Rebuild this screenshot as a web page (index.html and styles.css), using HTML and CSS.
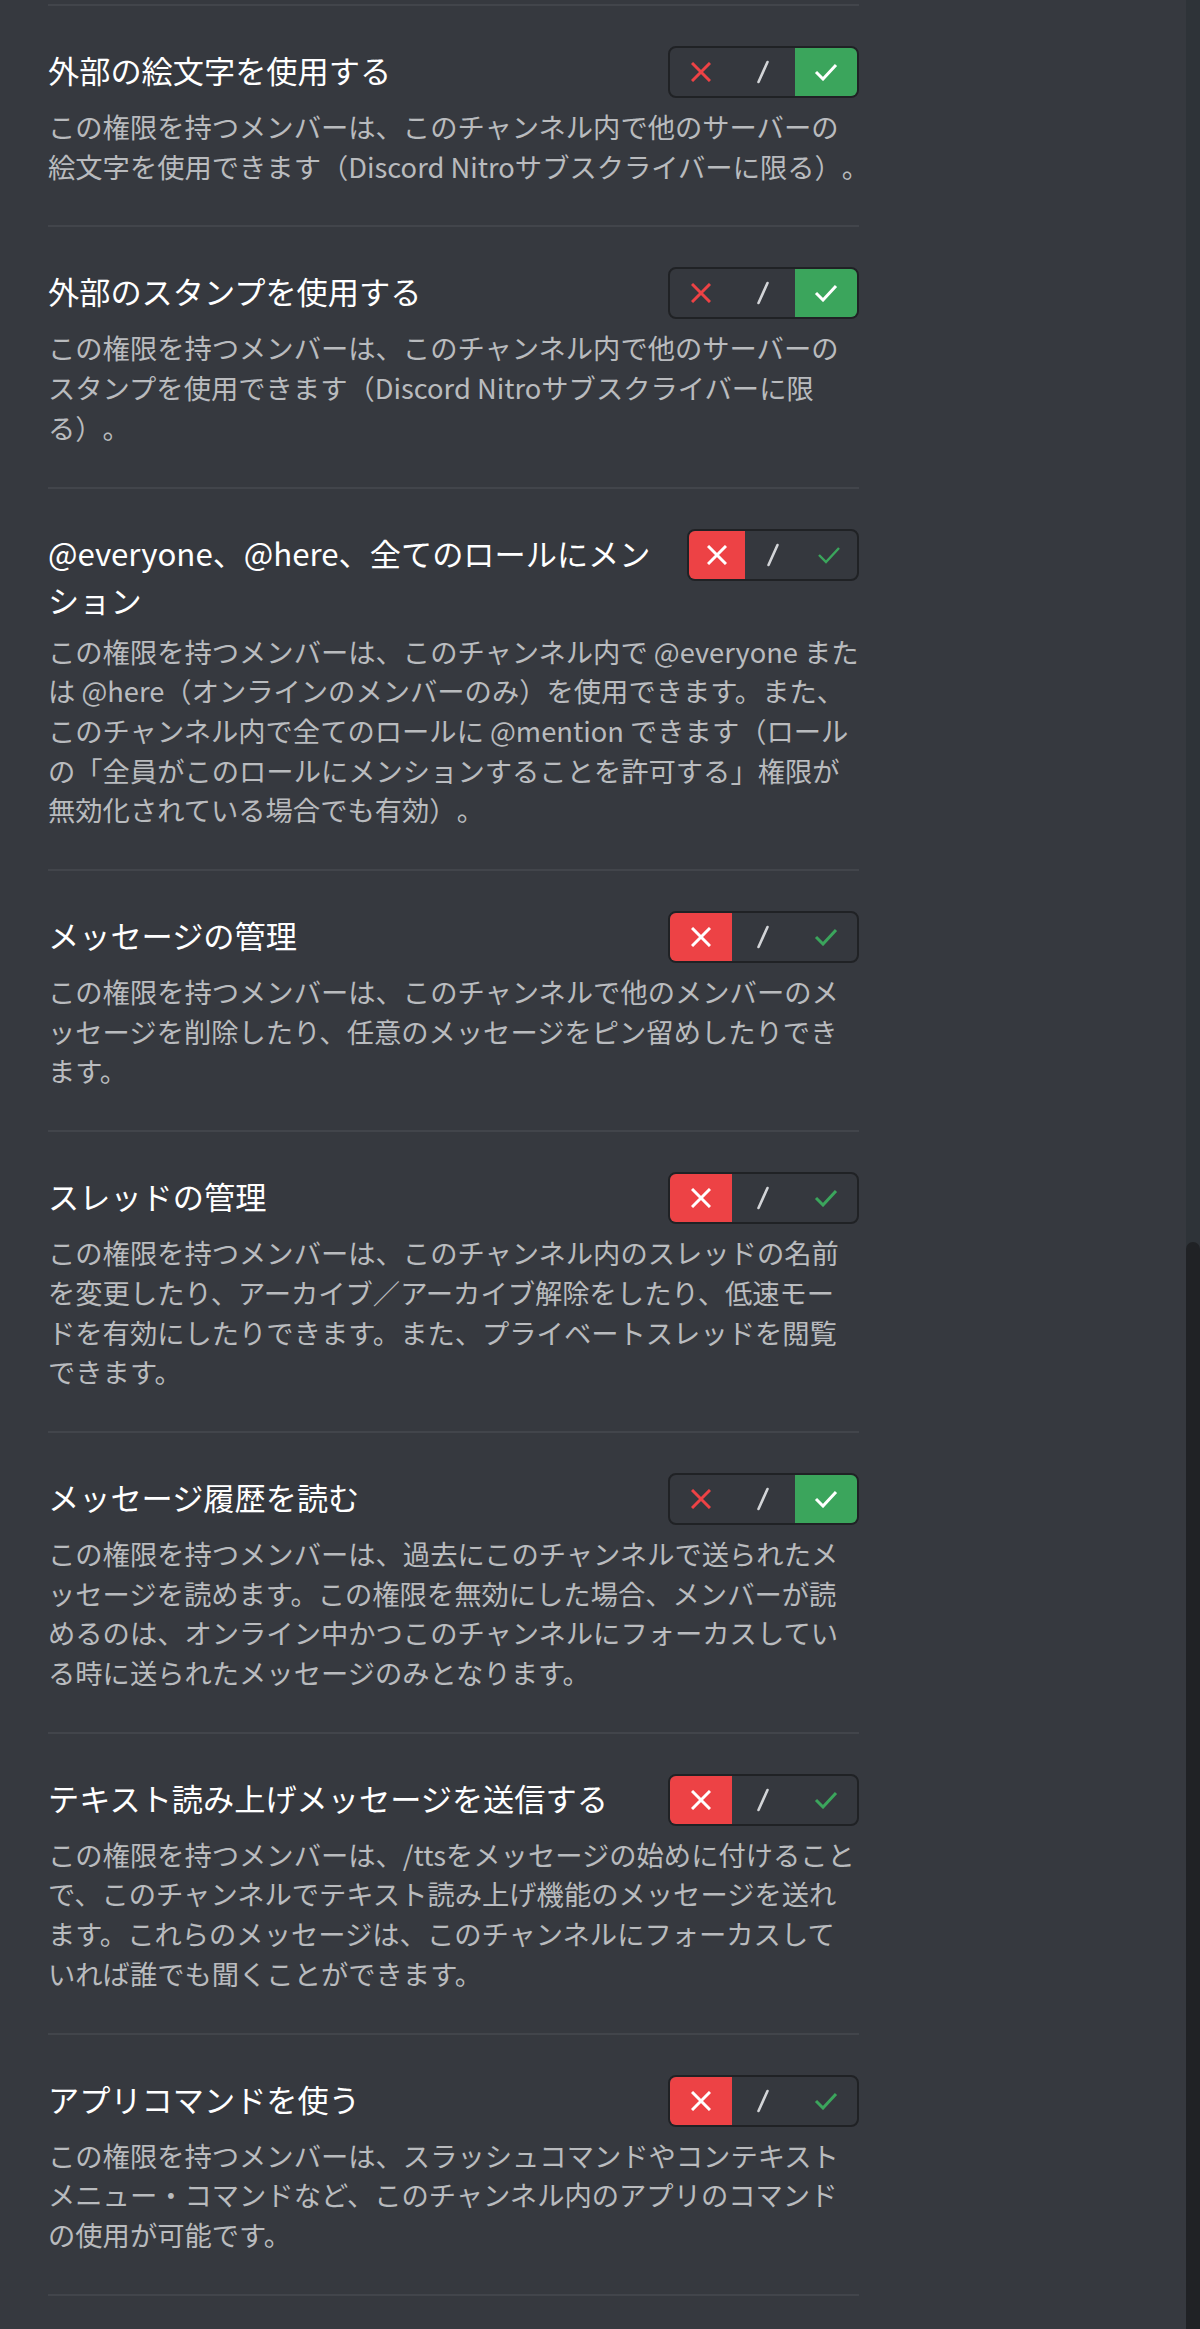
FILE: index.html
```html
<!DOCTYPE html>
<html lang="ja">
<head>
<meta charset="utf-8">
<title>チャンネル権限</title>
<link rel="stylesheet" href="styles.css">
</head>
<body>
<main class="page">
  <div class="list">

    <section class="perm">
      <div class="perm-head">
        <h3 class="perm-title">外部の絵文字を使用する</h3>
        <div class="toggle">
          <span class="seg seg-deny"><svg class="ico-x" viewBox="0 0 20 20"><path d="M1 1L19 19M19 1L1 19"/></svg></span>
          <span class="seg seg-pass"><svg class="ico-slash" viewBox="0 0 14 24"><path d="M11.5 2L2.5 22"/></svg></span>
          <span class="seg seg-allow is-on"><svg class="ico-check" viewBox="0 0 24 18"><path d="M2 9L9 16L22 2"/></svg></span>
        </div>
      </div>
      <p class="perm-desc">この権限を持つメンバーは、このチャンネル内で他のサーバーの<br>絵文字を使用できます（Discord Nitroサブスクライバーに限る）。</p>
    </section>

    <section class="perm">
      <div class="perm-head">
        <h3 class="perm-title">外部のスタンプを使用する</h3>
        <div class="toggle">
          <span class="seg seg-deny"><svg class="ico-x" viewBox="0 0 20 20"><path d="M1 1L19 19M19 1L1 19"/></svg></span>
          <span class="seg seg-pass"><svg class="ico-slash" viewBox="0 0 14 24"><path d="M11.5 2L2.5 22"/></svg></span>
          <span class="seg seg-allow is-on"><svg class="ico-check" viewBox="0 0 24 18"><path d="M2 9L9 16L22 2"/></svg></span>
        </div>
      </div>
      <p class="perm-desc">この権限を持つメンバーは、このチャンネル内で他のサーバーの<br>スタンプを使用できます（Discord Nitroサブスクライバーに限<br>る）。</p>
    </section>

    <section class="perm">
      <div class="perm-head">
        <h3 class="perm-title">@everyone、@here、全てのロールにメン<br>ション</h3>
        <div class="toggle toggle--compact">
          <span class="seg seg-deny is-on"><svg class="ico-x" viewBox="0 0 20 20"><path d="M1 1L19 19M19 1L1 19"/></svg></span>
          <span class="seg seg-pass"><svg class="ico-slash" viewBox="0 0 14 24"><path d="M11.5 2L2.5 22"/></svg></span>
          <span class="seg seg-allow"><svg class="ico-check ico-check--thin" viewBox="0 0 24 18"><path d="M2 9L9 16L22 2"/></svg></span>
        </div>
      </div>
      <p class="perm-desc">この権限を持つメンバーは、このチャンネル内で @everyone また<br>は @here（オンラインのメンバーのみ）を使用できます。また、<br>このチャンネル内で全てのロールに @mention できます（ロール<br>の「全員がこのロールにメンションすることを許可する」権限が<br>無効化されている場合でも有効）。</p>
    </section>

    <section class="perm">
      <div class="perm-head">
        <h3 class="perm-title">メッセージの管理</h3>
        <div class="toggle">
          <span class="seg seg-deny is-on"><svg class="ico-x" viewBox="0 0 20 20"><path d="M1 1L19 19M19 1L1 19"/></svg></span>
          <span class="seg seg-pass"><svg class="ico-slash" viewBox="0 0 14 24"><path d="M11.5 2L2.5 22"/></svg></span>
          <span class="seg seg-allow"><svg class="ico-check" viewBox="0 0 24 18"><path d="M2 9L9 16L22 2"/></svg></span>
        </div>
      </div>
      <p class="perm-desc">この権限を持つメンバーは、このチャンネルで他のメンバーのメ<br>ッセージを削除したり、任意のメッセージをピン留めしたりでき<br>ます。</p>
    </section>

    <section class="perm">
      <div class="perm-head">
        <h3 class="perm-title">スレッドの管理</h3>
        <div class="toggle">
          <span class="seg seg-deny is-on"><svg class="ico-x" viewBox="0 0 20 20"><path d="M1 1L19 19M19 1L1 19"/></svg></span>
          <span class="seg seg-pass"><svg class="ico-slash" viewBox="0 0 14 24"><path d="M11.5 2L2.5 22"/></svg></span>
          <span class="seg seg-allow"><svg class="ico-check" viewBox="0 0 24 18"><path d="M2 9L9 16L22 2"/></svg></span>
        </div>
      </div>
      <p class="perm-desc">この権限を持つメンバーは、このチャンネル内のスレッドの名前<br>を変更したり、アーカイブ／アーカイブ解除をしたり、低速モー<br>ドを有効にしたりできます。また、プライベートスレッドを閲覧<br>できます。</p>
    </section>

    <section class="perm">
      <div class="perm-head">
        <h3 class="perm-title">メッセージ履歴を読む</h3>
        <div class="toggle">
          <span class="seg seg-deny"><svg class="ico-x" viewBox="0 0 20 20"><path d="M1 1L19 19M19 1L1 19"/></svg></span>
          <span class="seg seg-pass"><svg class="ico-slash" viewBox="0 0 14 24"><path d="M11.5 2L2.5 22"/></svg></span>
          <span class="seg seg-allow is-on"><svg class="ico-check" viewBox="0 0 24 18"><path d="M2 9L9 16L22 2"/></svg></span>
        </div>
      </div>
      <p class="perm-desc">この権限を持つメンバーは、過去にこのチャンネルで送られたメ<br>ッセージを読めます。この権限を無効にした場合、メンバーが読<br>めるのは、オンライン中かつこのチャンネルにフォーカスしてい<br>る時に送られたメッセージのみとなります。</p>
    </section>

    <section class="perm">
      <div class="perm-head">
        <h3 class="perm-title">テキスト読み上げメッセージを送信する</h3>
        <div class="toggle">
          <span class="seg seg-deny is-on"><svg class="ico-x" viewBox="0 0 20 20"><path d="M1 1L19 19M19 1L1 19"/></svg></span>
          <span class="seg seg-pass"><svg class="ico-slash" viewBox="0 0 14 24"><path d="M11.5 2L2.5 22"/></svg></span>
          <span class="seg seg-allow"><svg class="ico-check" viewBox="0 0 24 18"><path d="M2 9L9 16L22 2"/></svg></span>
        </div>
      </div>
      <p class="perm-desc">この権限を持つメンバーは、/ttsをメッセージの始めに付けること<br>で、このチャンネルでテキスト読み上げ機能のメッセージを送れ<br>ます。これらのメッセージは、このチャンネルにフォーカスして<br>いれば誰でも聞くことができます。</p>
    </section>

    <section class="perm">
      <div class="perm-head">
        <h3 class="perm-title">アプリコマンドを使う</h3>
        <div class="toggle">
          <span class="seg seg-deny is-on"><svg class="ico-x" viewBox="0 0 20 20"><path d="M1 1L19 19M19 1L1 19"/></svg></span>
          <span class="seg seg-pass"><svg class="ico-slash" viewBox="0 0 14 24"><path d="M11.5 2L2.5 22"/></svg></span>
          <span class="seg seg-allow"><svg class="ico-check" viewBox="0 0 24 18"><path d="M2 9L9 16L22 2"/></svg></span>
        </div>
      </div>
      <p class="perm-desc">この権限を持つメンバーは、スラッシュコマンドやコンテキスト<br>メニュー・コマンドなど、このチャンネル内のアプリのコマンド<br>の使用が可能です。</p>
    </section>

  </div>
</main>
<div class="scrollbar"><div class="scrollbar-thumb"></div></div>
</body>
</html>
```
FILE: styles.css
```css
html, body {
  margin: 0;
  padding: 0;
}
body {
  background: #36393f;
  font-family: "Noto Sans CJK JP", "Noto Sans", "Liberation Sans", sans-serif;
  height: 2329px;
  overflow: hidden;
  text-spacing-trim: space-all;
}
.page {
  padding: 4px 0 0 48px;
}
.list {
  width: 811px;
  border-top: 2px solid #42454b;
}
.perm {
  padding: 40px 0 39px;
  border-bottom: 2px solid #42454b;
}
.perm-head {
  display: flex;
  align-items: flex-start;
  gap: 20px;
}
.perm-title {
  flex: 1;
  min-width: 0;
  margin: 0;
  font-size: 31.2px;
  line-height: 47px;
  font-weight: 400;
  color: #ffffff;
  white-space: nowrap;
}
.toggle {
  flex: none;
  box-sizing: border-box;
  width: 191px;
  height: 52px;
  border: 2px solid #202225;
  border-radius: 8px;
  display: flex;
  overflow: hidden;
  background: #35383e;
}
.toggle--compact {
  width: 172px;
}
.seg {
  flex: 1;
  display: flex;
  align-items: center;
  justify-content: center;
}
.seg svg {
  display: block;
  fill: none;
  stroke-linejoin: miter;
}
.ico-x {
  width: 20px;
  height: 20px;
  stroke-width: 3;
  stroke-linecap: butt;
}
.ico-slash {
  width: 14px;
  height: 24px;
  stroke: #d2d4d7;
  stroke-width: 2.6;
  stroke-linecap: round;
}
.ico-check {
  width: 24px;
  height: 18px;
  stroke-width: 3;
  stroke-linecap: butt;
}
.ico-check--thin {
  stroke-width: 2.4;
}
.seg-deny .ico-x {
  stroke: #ed4245;
}
.seg-allow .ico-check {
  stroke: #3ba55c;
}
.seg-deny.is-on {
  background: #ed4245;
}
.seg-allow.is-on {
  background: #3ba55c;
}
.seg.is-on svg {
  stroke: #ffffff;
}
.perm-desc {
  margin: 9px 0 0;
  font-size: 27.3px;
  line-height: 39.7px;
  color: #b9bbbe;
  white-space: nowrap;
}
.scrollbar {
  position: fixed;
  top: 0;
  right: 0;
  width: 14px;
  height: 100%;
  background: #2e3338;
}
.scrollbar-thumb {
  position: absolute;
  top: 1242px;
  left: 0;
  right: 0;
  bottom: 0;
  background: #202225;
  border-radius: 7px 7px 0 0;
}
```
